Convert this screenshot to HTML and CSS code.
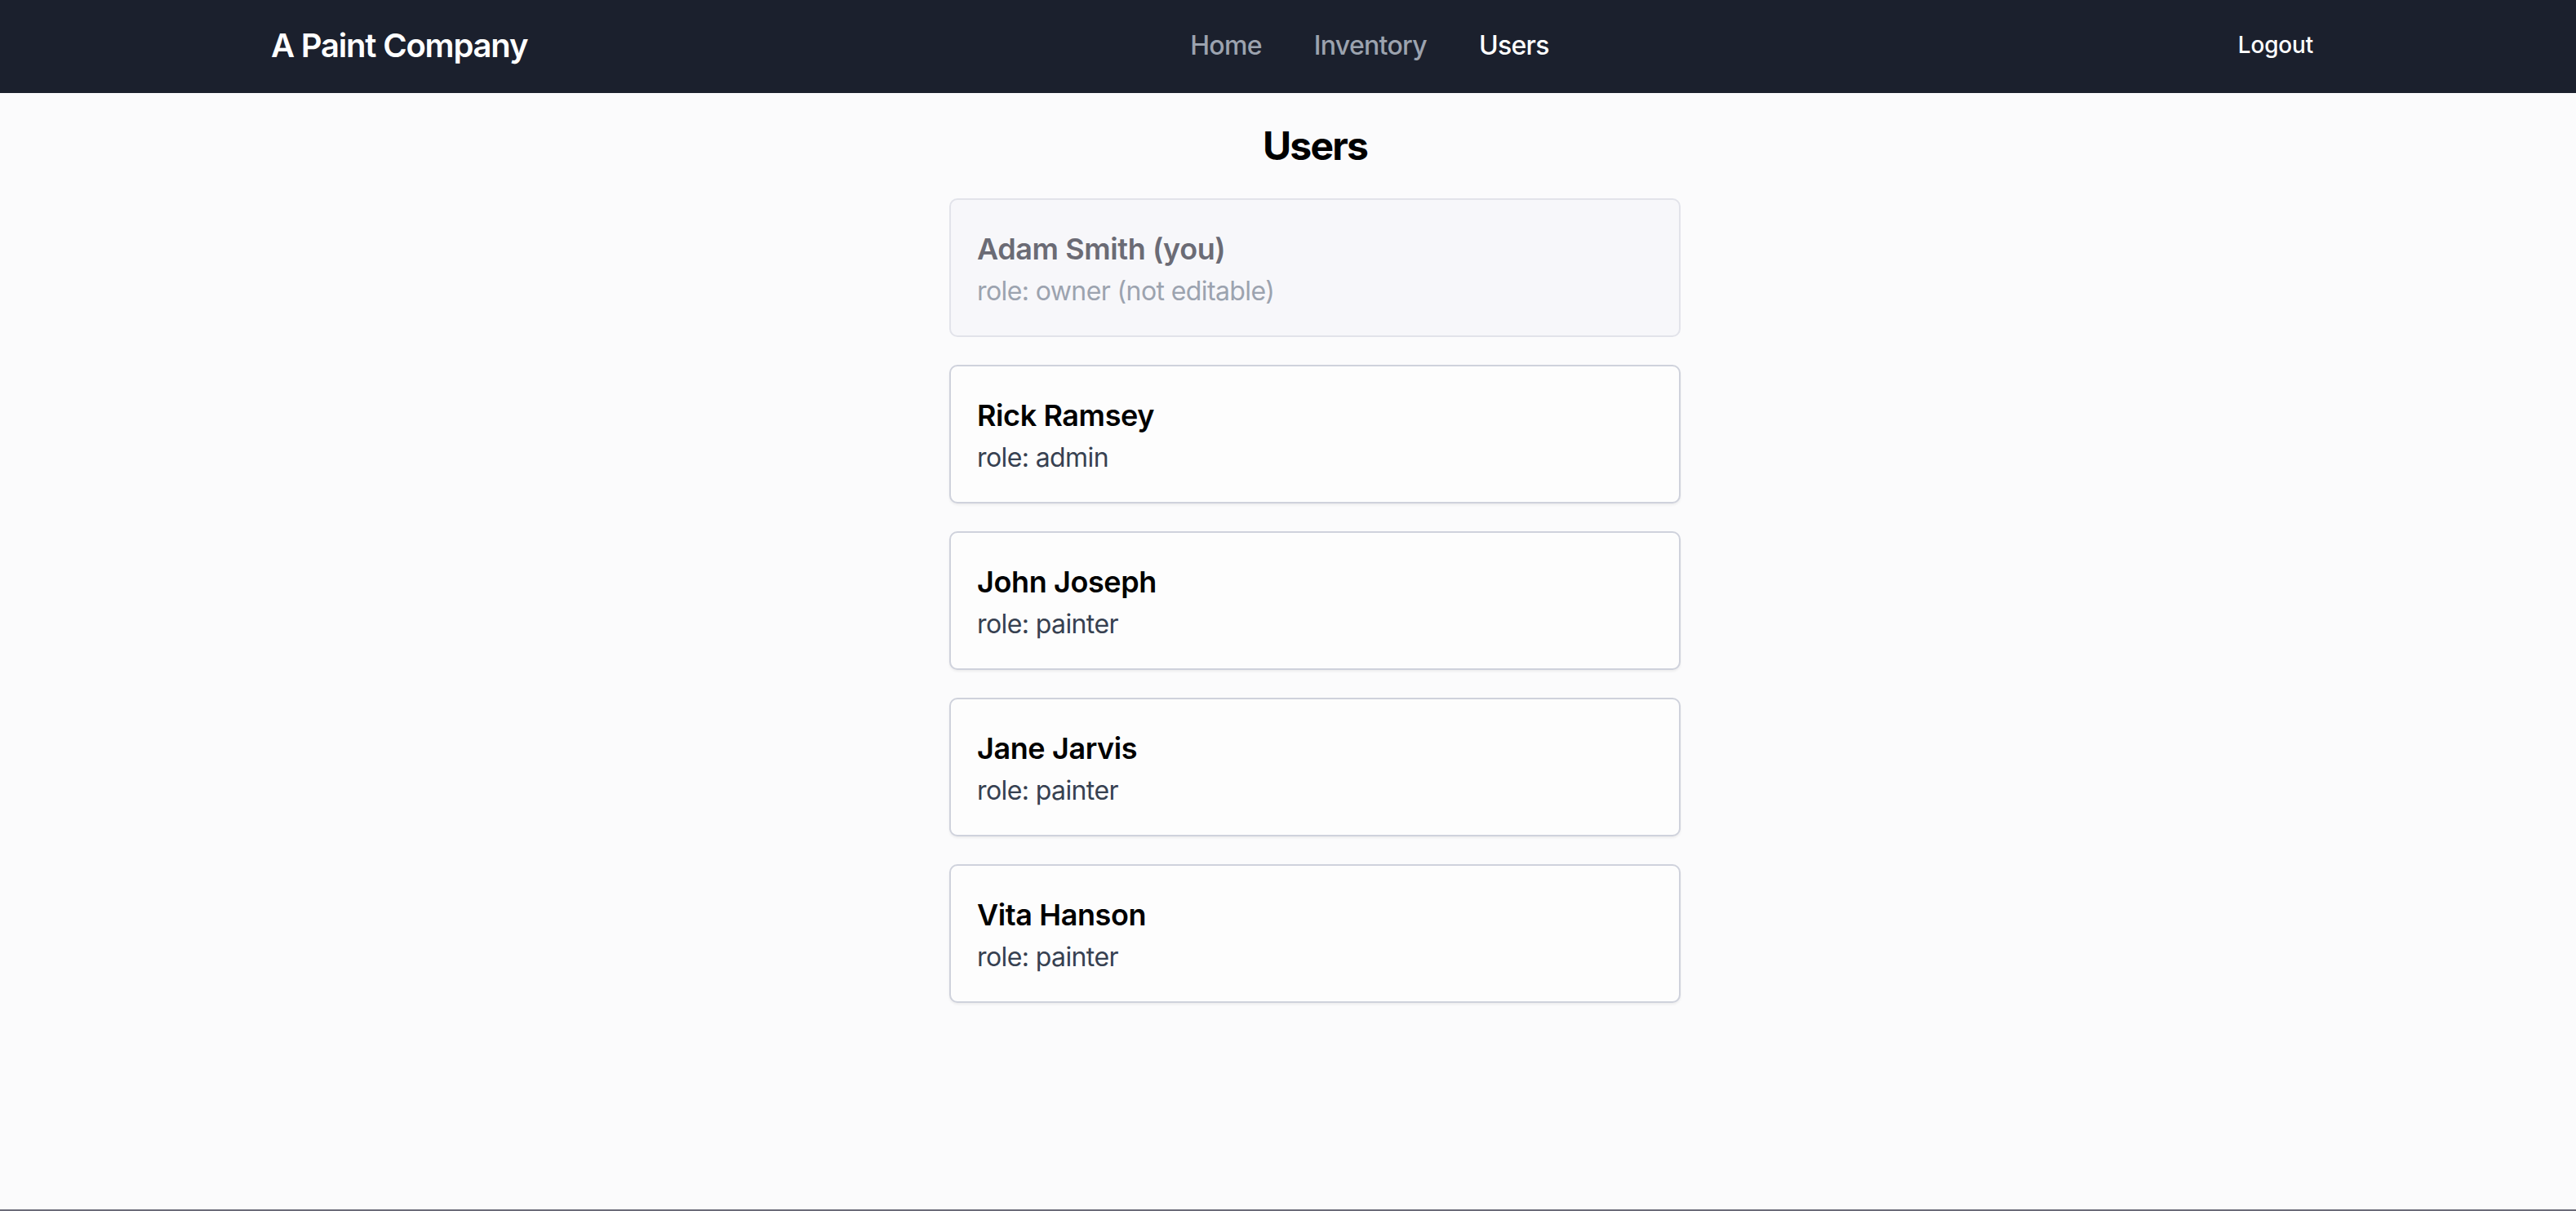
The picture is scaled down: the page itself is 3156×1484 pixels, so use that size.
FILE: index.html
```html
<!DOCTYPE html>
<html lang="en">
<head>
<meta charset="utf-8">
<title>Users - A Paint Company</title>
<link rel="stylesheet" href="styles.css">
</head>
<body>
<header class="topbar">
  <div class="brand">A Paint Company</div>
  <nav class="links">
    <a class="link">Home</a>
    <a class="link">Inventory</a>
    <a class="link active">Users</a>
  </nav>
  <button class="logout">Logout</button>
</header>
<main class="page">
  <div class="column">
    <h1 class="title">Users</h1>
    <div class="card owner">
      <div class="name">Adam Smith (you)</div>
      <div class="role">role: owner (not editable)</div>
    </div>
    <div class="card">
      <div class="name">Rick Ramsey</div>
      <div class="role">role: admin</div>
    </div>
    <div class="card">
      <div class="name">John Joseph</div>
      <div class="role">role: painter</div>
    </div>
    <div class="card">
      <div class="name">Jane Jarvis</div>
      <div class="role">role: painter</div>
    </div>
    <div class="card">
      <div class="name">Vita Hanson</div>
      <div class="role">role: painter</div>
    </div>
  </div>
</main>
</body>
</html>
```

FILE: styles.css
```css
html, body {
  margin: 0;
  padding: 0;
}
body {
  font-family: Inter, "Liberation Sans", sans-serif;
  background: #fbfbfc;
  height: 1484px;
  box-sizing: border-box;
  border-bottom: 2px solid #6b6b78;
  overflow: hidden;
}
.topbar {
  height: 114px;
  background: #1b202d;
  display: flex;
  align-items: center;
  justify-content: space-between;
  padding: 0 282px 4px 332px;
  box-sizing: border-box;
}
.brand {
  color: #ffffff;
  font-size: 40px;
  font-weight: 600;
  letter-spacing: -1.2px;
}
.links {
  display: flex;
  gap: 64px;
}
.link {
  color: #9ca3af;
  font-size: 32px;
  font-weight: 500;
  letter-spacing: -0.7px;
  text-decoration: none;
}
.link.active {
  color: #ffffff;
}
.logout {
  background: none;
  border: 0;
  color: #ffffff;
  font-family: inherit;
  font-size: 28px;
  font-weight: 500;
  letter-spacing: -0.2px;
  padding: 0 40px 0 32px;
}
.page {
  padding: 33px 0 0 66px;
}
.column {
  width: 896px;
  margin: 0 auto;
  display: flex;
  flex-direction: column;
  gap: 34px;
}
.title {
  margin: 0;
  text-align: center;
  font-size: 48px;
  line-height: 64px;
  font-weight: 700;
  letter-spacing: -1.8px;
  color: #000;
}
.card {
  box-sizing: border-box;
  height: 170px;
  border: 2px solid #cfd2dc;
  border-radius: 10px;
  background: #fdfdfd;
  padding: 32px;
  box-shadow: 0 2px 3px rgba(0, 0, 0, 0.06);
}
.title + .card {
  margin-top: -2px;
}
.name {
  font-size: 36px;
  line-height: 56px;
  font-weight: 600;
  letter-spacing: -0.4px;
  color: #000000;
}
.role {
  font-size: 32px;
  line-height: 48px;
  letter-spacing: -0.6px;
  color: #374151;
}
.owner {
  background: #f7f7fa;
  border-color: #e2e3ea;
  box-shadow: none;
}
.owner .name {
  color: #6b6b75;
}
.owner .role {
  color: #9ca3af;
}
```
